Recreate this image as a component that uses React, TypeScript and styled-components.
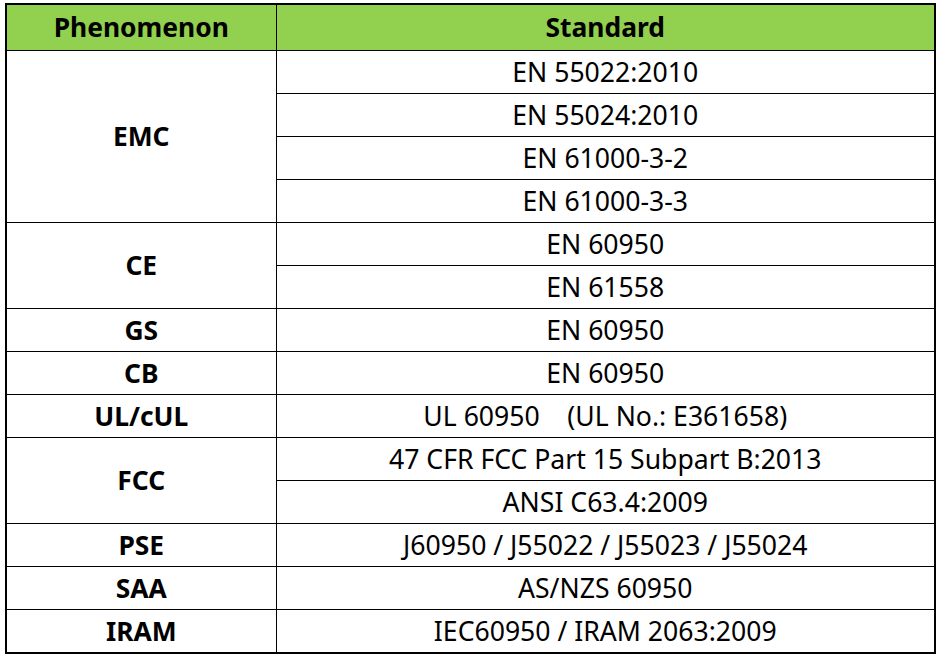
import styled, { createGlobalStyle } from 'styled-components';

const GlobalStyle = createGlobalStyle`
  html, body {
    margin: 0;
    padding: 0;
    background: #ffffff;
  }
  body {
    font-family: "Noto Sans", "Open Sans", "Liberation Sans", sans-serif;
    color: #000000;
  }
`;

const Page = styled.div`
  padding: 3px 0 0 5px;
`;

const Table = styled.table`
  width: 931px;
  border-collapse: collapse;
  table-layout: fixed;
  border: 2px solid #000;
`;

const HeadCell = styled.th`
  height: 45px;
  padding: 0;
  background-color: #92d050;
  border: 1px solid #000;
  font-size: 26.4px;
  line-height: 1;
  font-weight: 700;
  text-align: center;
  vertical-align: middle;
`;

const NameCell = styled.td`
  padding: 0;
  border: 1px solid #000;
  font-size: 26.4px;
  line-height: 1;
  font-weight: 700;
  text-align: center;
  vertical-align: middle;
`;

const StdCell = styled.td`
  height: 42px;
  padding: 0;
  border: 1px solid #000;
  font-size: 26.6px;
  line-height: 1;
  font-weight: 400;
  text-align: center;
  vertical-align: middle;
  white-space: pre;
`;

interface IGroup {
  name: string;
  standards: string[];
}

const groups: IGroup[] = [
  {
    name: 'EMC',
    standards: ['EN 55022:2010', 'EN 55024:2010', 'EN 61000-3-2', 'EN 61000-3-3'],
  },
  { name: 'CE', standards: ['EN 60950', 'EN 61558'] },
  { name: 'GS', standards: ['EN 60950'] },
  { name: 'CB', standards: ['EN 60950'] },
  { name: 'UL/cUL', standards: ['UL 60950    (UL No.: E361658)'] },
  {
    name: 'FCC',
    standards: ['47 CFR FCC Part 15 Subpart B:2013', 'ANSI C63.4:2009'],
  },
  { name: 'PSE', standards: ['J60950 / J55022 / J55023 / J55024'] },
  { name: 'SAA', standards: ['AS/NZS 60950'] },
  { name: 'IRAM', standards: ['IEC60950 / IRAM 2063:2009'] },
];

const App = () => {
  return (
    <Page>
      <GlobalStyle />
      <Table>
        <colgroup>
          <col style={{ width: 270 }} />
          <col />
        </colgroup>
        <thead>
          <tr>
            <HeadCell>Phenomenon</HeadCell>
            <HeadCell>Standard</HeadCell>
          </tr>
        </thead>
        <tbody>
          {groups.map((group) =>
            group.standards.map((std, i) => (
              <tr key={group.name + std}>
                {i === 0 && (
                  <NameCell rowSpan={group.standards.length}>{group.name}</NameCell>
                )}
                <StdCell>{std}</StdCell>
              </tr>
            ))
          )}
        </tbody>
      </Table>
    </Page>
  );
};

export default App;
